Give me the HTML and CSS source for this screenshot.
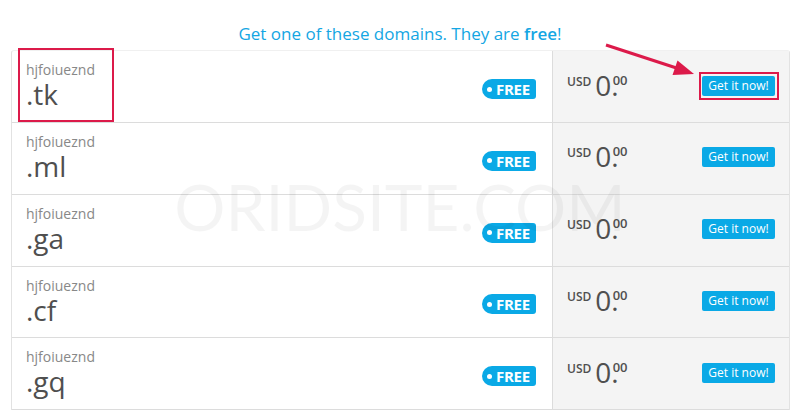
FILE: index.html
```html
<!DOCTYPE html>
<html>
<head>
  <title>Domain search</title>
  <link rel="stylesheet" href="styles.css">
</head>
<body>
  <div class="page">
    <h2 class="title">Get one of these domains. They are <b>free</b>!</h2>

    <div class="domains">
      <div class="domain-row">
        <div class="domain-info">
          <div class="domain-name">
            <span class="sld">hjfoiueznd</span>
            <span class="tld">.tk</span>
          </div>
          <span class="badge"><i></i>FREE</span>
        </div>
        <div class="domain-price">
          <div class="price"><span class="cur">USD</span><span class="int">0.</span><span class="dec">00</span></div>
          <button type="button" class="btn-get">Get it now!</button>
        </div>
      </div>

      <div class="domain-row">
        <div class="domain-info">
          <div class="domain-name">
            <span class="sld">hjfoiueznd</span>
            <span class="tld">.ml</span>
          </div>
          <span class="badge"><i></i>FREE</span>
        </div>
        <div class="domain-price">
          <div class="price"><span class="cur">USD</span><span class="int">0.</span><span class="dec">00</span></div>
          <button type="button" class="btn-get">Get it now!</button>
        </div>
      </div>

      <div class="domain-row">
        <div class="domain-info">
          <div class="domain-name">
            <span class="sld">hjfoiueznd</span>
            <span class="tld">.ga</span>
          </div>
          <span class="badge"><i></i>FREE</span>
        </div>
        <div class="domain-price">
          <div class="price"><span class="cur">USD</span><span class="int">0.</span><span class="dec">00</span></div>
          <button type="button" class="btn-get">Get it now!</button>
        </div>
      </div>

      <div class="domain-row">
        <div class="domain-info">
          <div class="domain-name">
            <span class="sld">hjfoiueznd</span>
            <span class="tld">.cf</span>
          </div>
          <span class="badge"><i></i>FREE</span>
        </div>
        <div class="domain-price">
          <div class="price"><span class="cur">USD</span><span class="int">0.</span><span class="dec">00</span></div>
          <button type="button" class="btn-get">Get it now!</button>
        </div>
      </div>

      <div class="domain-row">
        <div class="domain-info">
          <div class="domain-name">
            <span class="sld">hjfoiueznd</span>
            <span class="tld">.gq</span>
          </div>
          <span class="badge"><i></i>FREE</span>
        </div>
        <div class="domain-price">
          <div class="price"><span class="cur">USD</span><span class="int">0.</span><span class="dec">00</span></div>
          <button type="button" class="btn-get">Get it now!</button>
        </div>
      </div>
    </div>

    <!-- annotations drawn over the screenshot -->
    <div class="mark name-mark"></div>
    <div class="mark btn-mark"></div>
    <svg class="arrow" width="800" height="120" viewBox="0 0 800 120">
      <line x1="606" y1="45" x2="678" y2="68.5" stroke="#dc1a4a" stroke-width="3"/>
      <polygon points="694,74 672.5,75 677.5,60.5" fill="#dc1a4a"/>
    </svg>
    <div class="watermark">ORIDSITE.COM</div>
  </div>
</body>
</html>
```

FILE: styles.css
```css
body {
  margin: 0;
  background: #fff;
  font-family: "Open Sans", Arial, sans-serif;
}

.page {
  position: relative;
  width: 800px;
  height: 418px;
  overflow: hidden;
}

.title {
  margin: 0 0 4px;
  padding-top: 22px;
  font-size: 17px;
  line-height: 24px;
  font-weight: 400;
  color: #14a6e3;
  text-align: center;
}

.title b {
  font-weight: 600;
}

.domains {
  margin: 0 10px 0 11px;
  border: 1px solid #e2e2e2;
  border-top-color: #f0f0f0;
  border-bottom: 0;
  border-radius: 3px 3px 0 0;
}

.domain-row {
  display: grid;
  grid-template-columns: 1fr 237px;
  height: 71px;
  border-bottom: 1px solid #dcdcdc;
}

.domain-row:nth-child(even) {
  height: 70.5px;
}

.domain-info {
  display: flex;
  justify-content: space-between;
  align-items: center;
  padding: 0 16px 0 14px;
}

.domain-name {
  display: flex;
  flex-direction: column;
  align-self: flex-start;
  padding-top: 10px;
}

.sld {
  font-size: 14px;
  line-height: 18px;
  color: #888;
}

.tld {
  font-size: 28px;
  line-height: 30px;
  font-weight: 500;
  color: #4f4f4f;
}

.badge {
  display: flex;
  align-items: center;
  height: 20px;
  width: 54px;
  margin-top: 5px;
  box-sizing: border-box;
  padding-left: 5px;
  background: #0aa9e6;
  border-radius: 10px 3px 3px 10px;
  color: #fff;
  font-size: 15px;
  font-weight: 700;
  letter-spacing: -0.3px;
}

.badge i {
  width: 5px;
  height: 5px;
  margin-right: 4px;
  border-radius: 50%;
  background: #fff;
}

.domain-price {
  display: flex;
  justify-content: space-between;
  align-items: center;
  padding: 0 14px;
  background: #f4f4f4;
  border-left: 1px solid #dcdcdc;
}

.price {
  display: flex;
  align-items: flex-start;
  margin-bottom: 4px;
  color: #4f4f4f;
}

.cur {
  margin: 4px 4px 0 0;
  font-size: 12px;
  line-height: 14px;
  font-weight: 600;
}

.int {
  font-size: 28px;
  line-height: 28px;
  font-weight: 500;
}

.dec {
  margin: 3px 0 0 -6px;
  font-size: 13px;
  line-height: 13px;
  font-weight: 600;
}

.btn-get {
  height: 20px;
  width: 73px;
  margin-bottom: 2px;
  padding: 0;
  border: 0;
  border-radius: 2px;
  background: #0aa9e6;
  color: #fff;
  font-family: "Open Sans", Arial, sans-serif;
  font-size: 12px;
  line-height: 20px;
  cursor: pointer;
}

.mark {
  position: absolute;
  box-sizing: border-box;
  border: 2px solid #dc1a4a;
}

.name-mark {
  left: 18px;
  top: 48px;
  width: 96px;
  height: 74px;
}

.btn-mark {
  left: 699px;
  top: 72px;
  width: 80px;
  height: 28px;
}

.arrow {
  position: absolute;
  left: 0;
  top: 0;
}

.watermark {
  position: absolute;
  left: 0;
  right: 0;
  top: 174px;
  text-align: center;
  font-family: Lato, "Open Sans", sans-serif;
  font-size: 64px;
  line-height: 66px;
  color: rgba(0, 0, 0, 0.045);
  pointer-events: none;
}
```
